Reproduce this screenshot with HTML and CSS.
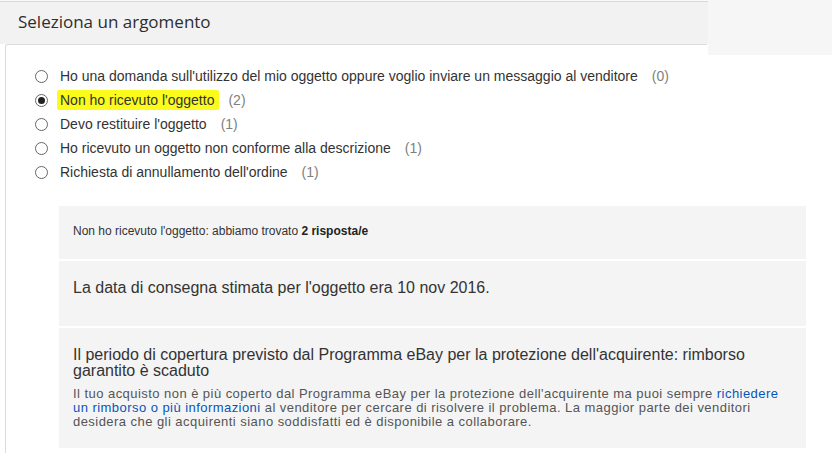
FILE: index.html
```html
<!DOCTYPE html>
<html lang="it">
<head>
	<meta charset="UTF-8">
	<title>Seleziona un argomento</title>
	<link rel="stylesheet" href="styles.css">
</head>
<body>
	<div class="prev"></div>
	<div class="side"></div>
	<div class="head">Seleziona un argomento</div>
	<div class="card">
		<ul class="topics">
			<li><span class="radio"></span><span class="label">Ho una domanda sull'utilizzo del mio oggetto oppure voglio inviare un messaggio al venditore</span><span class="count">(0)</span></li>
			<li><span class="radio on"></span><span class="label mark">Non ho ricevuto l'oggetto</span><span class="count">(2)</span></li>
			<li><span class="radio"></span><span class="label">Devo restituire l'oggetto</span><span class="count">(1)</span></li>
			<li><span class="radio"></span><span class="label">Ho ricevuto un oggetto non conforme alla descrizione</span><span class="count">(1)</span></li>
			<li><span class="radio"></span><span class="label">Richiesta di annullamento dell'ordine</span><span class="count">(1)</span></li>
		</ul>
		<div class="answers">
			<div class="sec found">Non ho ricevuto l'oggetto: abbiamo trovato <b>2 risposta/e</b></div>
			<div class="sec">
				<p class="big">La data di consegna stimata per l'oggetto era 10 nov 2016.</p>
			</div>
			<div class="sec last">
				<p class="big tight">Il periodo di copertura previsto dal Programma eBay per la protezione dell'acquirente: rimborso garantito è scaduto</p>
				<p class="note">Il tuo acquisto non è più coperto dal Programma eBay per la protezione dell'acquirente ma puoi sempre <a href="#">richiedere un rimborso o più informazioni</a> al venditore per cercare di risolvere il problema. La maggior parte dei venditori desidera che gli acquirenti siano soddisfatti ed è disponibile a collaborare.</p>
			</div>
		</div>
	</div>
</body>
</html>
```

FILE: styles.css
```css
*{
	margin: 0;
	padding: 0;
	list-style: none;
	box-sizing: border-box;
}
body{
	background: #fff;
	font-family: "Liberation Sans", Arial, sans-serif;
	color: #333;
	position: relative;
	overflow: hidden;
}
.prev{
	width: 712px;
	height: 2px;
	background: #fafafa;
	border-bottom: 1px solid #d8d8d8;
}
.side{
	position: absolute;
	left: 708px;
	top: 0;
	width: 124px;
	height: 55px;
	background: #f6f6f6;
}
.head{
	width: 708px;
	height: 42px;
	background: #f2f2f2;
	padding-left: 18px;
	line-height: 40px;
	font-family: "Open Sans", "DejaVu Sans", sans-serif;
	font-size: 17px;
	color: #2e2e2e;
}
.card{
	margin-left: 5px;
	background: #fff;
	border-left: 1px solid #dcdcdc;
	border-top: 1px solid #dcdcdc;
	border-radius: 3px 0 0 0;
	padding: 19px 0 40px 0;
	width: 702px;
	overflow: visible;
}
.topics{
	padding-left: 29px;
	font-size: 14px;
}
.topics li{
	height: 24px;
	display: flex;
	align-items: center;
}
.radio{
	width: 13px;
	height: 13px;
	border: 1px solid #666;
	border-radius: 50%;
	margin-right: 12px;
	display: flex;
	align-items: center;
	justify-content: center;
	flex: none;
}
.radio.on::after{
	content: "";
	width: 7px;
	height: 7px;
	border-radius: 50%;
	background: #222;
}
.label{
	color: #333;
}
.mark{
	background: #fbfb1c;
	margin-left: -3px;
	padding: 2px 5px 2px 3px;
	border-radius: 2px;
}
.mark + .count{
	margin-left: 9px;
}
.count{
	color: #808080;
	margin-left: 14px;
}
.answers{
	margin: 22px 0 0 53px;
	width: 747px;
	background: #f4f4f4;
}
.sec{
	padding: 18px 14px 29px;
	border-top: 2px solid #fff;
}
.found{
	border-top: none;
	font-size: 12px;
	line-height: 13px;
	padding: 19px 14px 21px;
}
.found b{
	color: #222;
}
.big{
	font-size: 16px;
	line-height: 18px;
	color: #333;
}
.last{
	padding: 19px 14px 19px;
}
.tight{
	line-height: 16px;
}
.note{
	margin-top: 8px;
	font-size: 13px;
	letter-spacing: 0.45px;
	line-height: 14px;
	color: #555;
}
.note a{
	color: #0654ba;
	text-decoration: none;
}
```
